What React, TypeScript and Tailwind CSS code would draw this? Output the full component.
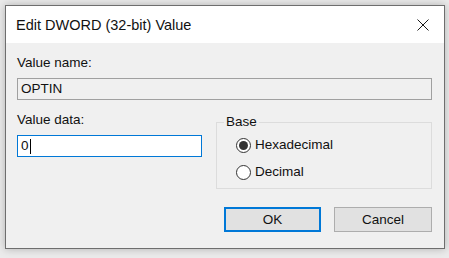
import React from "react";

function Radio({ checked, label }: { checked: boolean; label: string }) {
  return (
    <div className="flex items-center h-[16px]">
      <span className="w-[15px] h-[15px] rounded-full border border-[#333333] bg-white flex items-center justify-center">
        {checked && <span className="w-[9px] h-[9px] rounded-full bg-[#333333]" />}
      </span>
      <span className="ml-[4px] leading-[16px]">{label}</span>
    </div>
  );
}

export default function App() {
  return (
    <div
      className="w-[449px] h-[258px] bg-[#ebebeb] pt-[5px] pl-[5px] text-[13.5px] text-[#111111]"
      style={{ fontFamily: '"Liberation Sans", Arial, sans-serif' }}
    >
      <div className="w-[440px] h-[244px] border border-[#6e6e6e] bg-[#f0f0f0] flex flex-col shadow-[0_0_8px_rgba(0,0,0,0.25)]">
        {/* title bar */}
        <div className="h-[37px] bg-white flex items-center justify-between pl-[10px] pr-[15px]">
          <span className="text-[14.5px] leading-[18px] mt-[1px]">Edit DWORD (32-bit) Value</span>
          <svg width="12" height="12" viewBox="0 0 12 12" className="mt-[1px]">
            <path d="M0.5 0.5 L11.5 11.5 M11.5 0.5 L0.5 11.5" stroke="#1a1a1a" strokeWidth="1" fill="none" />
          </svg>
        </div>

        {/* body */}
        <div className="flex-1 flex flex-col pl-[11px] pr-[12px] pt-[12px]">
          <div className="leading-[16px]">Value name:</div>
          <div className="mt-[7px] h-[22px] border border-[#a0a0a0] bg-[#f0f0f0] flex items-center pl-[3px]">
            OPTIN
          </div>

          <div className="mt-[12px] flex">
            <div className="w-[185px] flex flex-col">
              <div className="leading-[16px]">Value data:</div>
              <div className="mt-[7px] h-[22px] border border-[#0078d7] bg-white flex items-center pl-[3px]">
                <span>0</span>
                <span className="w-px h-[15px] bg-black ml-[1px]" />
              </div>
            </div>

            <div className="relative ml-[14px] mt-[10px] w-[216px] h-[67px] border border-[#dcdcdc]">
              <span className="absolute left-[7px] top-[-9px] px-[2px] bg-[#f0f0f0] leading-[16px]">Base</span>
              <div className="flex flex-col gap-[11px] pl-[19px] pt-[14px]">
                <Radio checked label="Hexadecimal" />
                <Radio checked={false} label="Decimal" />
              </div>
            </div>
          </div>

          <div className="mt-[18px] flex justify-end gap-[13px]">
            <button className="w-[97px] h-[25px] bg-[#e1e1e1] border-2 border-[#0078d7] leading-[16px]">OK</button>
            <button className="w-[98px] h-[25px] bg-[#e1e1e1] border border-[#adadad] leading-[16px]">Cancel</button>
          </div>
        </div>
      </div>
    </div>
  );
}
